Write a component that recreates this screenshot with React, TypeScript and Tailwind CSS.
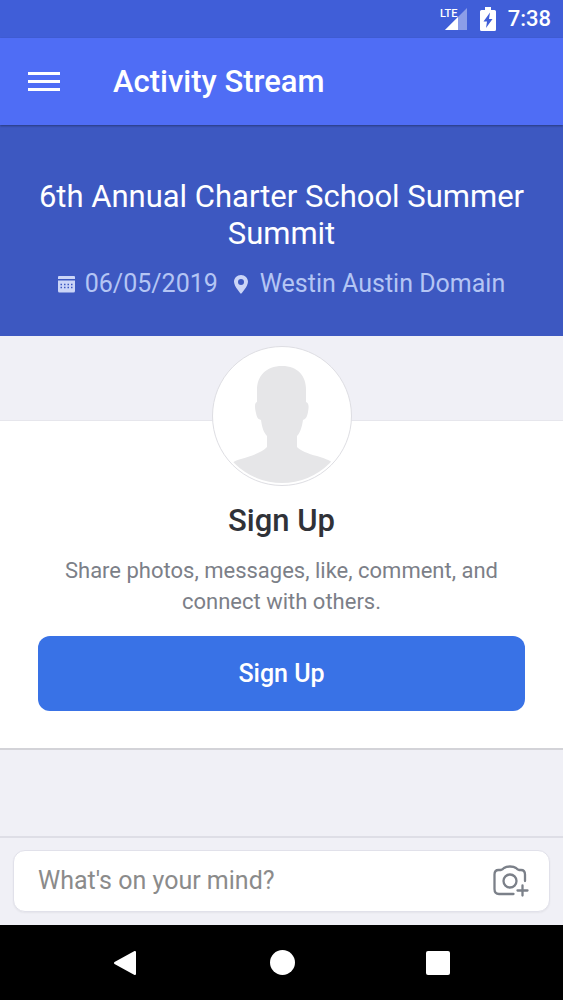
import React from "react";

const StatusBar = () => {
	return (
		<div className="flex h-[38px] items-center justify-end bg-[#405ed8] pr-3 text-white">
			<svg
				className="mr-3 h-[26px] w-7"
				viewBox="0 0 28 26"
				fill="none"
				aria-hidden="true"
			>
				<path
					d="M27 2V24H5Z"
					fill="#8c9ee8"
				/>
				<path
					d="M0 0h16v13H0z"
					fill="#405ed8"
				/>
				<path
					d="M18 11V24H5Z"
					fill="white"
				/>
				<text
					x="0"
					y="11"
					className="font-['Roboto'] text-[11px] font-medium"
					fill="white"
				>
					LTE
				</text>
			</svg>
			<svg
				className="mr-3 h-6 w-4"
				viewBox="0 0 16 24"
				aria-hidden="true"
			>
				<path
					d="M5 0H11V3H14.5Q16 3 16 4.5V22.5Q16 24 14.5 24H1.5Q0 24 0 22.5V4.5Q0 3 1.5 3H5Z"
					fill="white"
				/>
				<path
					d="M10 5.5L3.500 14.500H7L6 21L12.500 12H9Z"
					fill="#405ed8"
				/>
			</svg>
			<span className="text-[22px] leading-6 font-medium">7:38</span>
		</div>
	);
};

const Avatar = () => {
	return (
		<div className="size-[140px] overflow-hidden rounded-full border border-[#dedee3] bg-white p-[2px]">
			<svg
				className="size-full rounded-full"
				viewBox="0 0 134 134"
				aria-hidden="true"
			>
				<path
					d="M67 17C51 17 42 27 42 41V53C39 54 40 60 41 64C42 69 43 70 46 71C47 79 49 84 52 87V98C47 104 35 107 26 110C21 111 19 113 17 114V134H118V114C115 111 108 109 102 107C93 105 85 101 82 98V87C85 84 87 78 88 71C91 70 92 68 93 63C94 58 94 54 91 53V41C91 27 83 17 67 17Z"
					fill="#e6e6e8"
				/>
			</svg>
		</div>
	);
};

const CameraPlus = () => {
	return (
		<svg
			className="h-8 w-9"
			viewBox="0 0 36 32"
			fill="none"
			stroke="#7b8089"
			strokeWidth="2.3"
			strokeLinecap="round"
			strokeLinejoin="round"
			aria-hidden="true"
		>
			<path d="M20.500 29H6Q1.500 29 1.500 24V9.500Q1.500 5 5.500 5H8Q9.500 4.500 11 3Q13 1.500 17 1.500T23 3Q24.500 4.500 26 5H28Q32 5 32 9.500V16" />
			<circle
				cx="17"
				cy="16"
				r="6.5"
			/>
			<path d="M29.500 20.500V30.500M24.500 25.500H34.500" />
		</svg>
	);
};

const App = () => {
	return (
		<div className="flex min-h-screen flex-col bg-[#f0f0f6] font-['Roboto',sans-serif]">
			<StatusBar />

			<header className="relative flex h-[87px] items-center bg-[#4f6df5] pl-7 text-white shadow-[0_1px_2px_rgba(0,0,0,0.35)]">
				<button
					type="button"
					aria-label="Menu"
					className="mr-[53px] flex w-8 flex-col gap-[5px]"
				>
					<span className="h-[3px] w-full bg-white" />
					<span className="h-[3px] w-full bg-white" />
					<span className="h-[3px] w-full bg-white" />
				</button>
				<h1 className="text-[31px] leading-9 font-medium">Activity Stream</h1>
			</header>

			<section className="bg-[#3d58c1] px-6 pt-[53px] pb-9 text-center">
				<h2 className="text-[31px] leading-[37px] text-white">6th Annual Charter School Summer Summit</h2>
				<div className="mt-4 flex items-center justify-center text-[25px] leading-8 text-[#b4c5f4]">
					<svg
						className="mr-[10px] size-[17px]"
						viewBox="0 0 17 17"
						fill="#cbd5f7"
						aria-hidden="true"
					>
						<path d="M1 0H16Q17 0 17 1V3H0V1Q0 0 1 0Z" />
						<path d="M0 4.500H17V15Q17 16.500 15.500 16.500H1.500Q0 16.500 0 15Z" />
						<path
							d="M2.500 8.500H15M2.500 11.500H15"
							stroke="#3d58c1"
							strokeWidth="1.5"
							strokeDasharray="1.5 2"
						/>
					</svg>
					<span>06/05/2019</span>
					<svg
						className="mr-3 ml-4 h-[19px] w-[14px]"
						viewBox="0 0 14 19"
						fill="#cbd5f7"
						aria-hidden="true"
					>
						<path
							fillRule="evenodd"
							d="M7 0C3 0 0 3 0 6.800C0 11.500 7 19 7 19S14 11.500 14 6.800C14 3 11 0 7 0ZM7 4A3 3 0 1 1 7 10A3 3 0 1 1 7 4Z"
						/>
					</svg>
					<span>Westin Austin Domain</span>
				</div>
			</section>

			<main className="flex-1 pt-[84px]">
				<div className="flex flex-col items-center border-t border-b-2 border-t-[#e6e6ec] border-b-[#d3d3d8] bg-white px-[38px] pb-[37px] text-center">
					<div className="-mt-[75px]">
						<Avatar />
					</div>
					<h3 className="mt-[17px] text-[31px] leading-9 font-medium text-[#303238]">Sign Up</h3>
					<p className="mt-4 px-6 text-[22px] leading-[31px] text-[#7c7f88]">
						Share photos, messages, like, comment, and connect with others.
					</p>
					<button
						type="button"
						className="mt-[19px] h-[75px] w-full rounded-xl bg-[#3972e6] text-[25px] font-medium text-white"
					>
						Sign Up
					</button>
				</div>
			</main>

			<form className="border-t-2 border-[#dedee6] px-[13px] pt-3 pb-[13px]">
				<div className="flex h-[62px] items-center rounded-xl border border-[#e1e1ea] bg-white pr-5 pl-6 shadow-xs">
					<input
						type="text"
						aria-label="What's on your mind?"
						placeholder="What's on your mind?"
						className="min-w-0 flex-1 text-[25px] leading-8 outline-none placeholder:text-[#8b8b8b]"
					/>
					<button
						type="button"
						aria-label="Add photo"
					>
						<CameraPlus />
					</button>
				</div>
			</form>

			<nav className="flex h-[75px] items-center justify-around bg-black px-[47px]">
				<button
					type="button"
					aria-label="Back"
				>
					<svg
						className="size-[26px]"
						viewBox="0 0 26 26"
						fill="white"
						stroke="white"
						strokeWidth="2"
						strokeLinejoin="round"
					>
						<path d="M22 2V24L2 13Z" />
					</svg>
				</button>
				<button
					type="button"
					aria-label="Home"
					className="size-[25px] rounded-full bg-white"
				/>
				<button
					type="button"
					aria-label="Recent apps"
					className="size-6 rounded-xs bg-white"
				/>
			</nav>
		</div>
	);
};

export default App;
